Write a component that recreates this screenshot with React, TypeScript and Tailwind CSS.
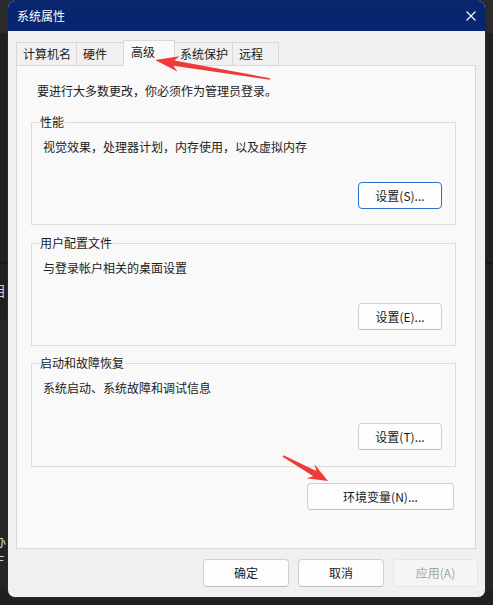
import React from "react";

// --- DATA ---
const TABS = [
  { label: "计算机名", cls: "w-[61px] pl-[6px]" },
  { label: "硬件", cls: "w-[48px] pl-[6px] -ml-[1px]" },
  { label: "高级", cls: "w-[52px] pl-[7px] -ml-[1px]", active: true },
  { label: "系统保护", cls: "w-[59px] pl-[5px] -ml-[1px]" },
  { label: "远程", cls: "w-[47px] pl-[6px] -ml-[1px]" },
];

const GROUPS = [
  { title: "性能", desc: "视觉效果，处理器计划，内存使用，以及虚拟内存", btn: "设置(S)...", focused: true, cls: "mt-[23px] h-[103px]" },
  { title: "用户配置文件", desc: "与登录帐户相关的桌面设置", btn: "设置(E)...", cls: "mt-[18px] h-[103px]" },
  { title: "启动和故障恢复", desc: "系统启动、系统故障和调试信息", btn: "设置(T)...", cls: "mt-[17px] h-[104px]" },
];

const WinButton: React.FC<{ label: string; className?: string; focused?: boolean; disabled?: boolean }> = ({
  label,
  className = "",
  focused,
  disabled,
}) => {
  const tone = disabled
    ? "bg-[#f5f5f5] border-[#e5e5e5] text-[#a3a3a3]"
    : focused
    ? "bg-[#fdfdfd] border-[#2a72c9] text-[#1b1b1b]"
    : "bg-[#fdfdfd] border-[#d0d0d0] border-b-[#bdbdbd] text-[#1b1b1b]";
  return (
    <div className={`flex items-center justify-center rounded-[4px] border text-[12px] leading-[16px] ${tone} ${className}`}>
      {label}
    </div>
  );
};

const GroupBox: React.FC<{ group: typeof GROUPS[0] }> = ({ group }) => (
  <div className={`relative flex flex-col border border-[#dcdcdc] pl-[11px] pt-[16px] ${group.cls}`}>
    {/* Legend over the border */}
    <span className="absolute -top-[9px] left-[7px] bg-[#f9f9f9] px-[1px] text-[12px] leading-[16px] text-[#1b1b1b]">
      {group.title}
    </span>
    <p className="text-[12px] leading-[16px] text-[#1b1b1b]">{group.desc}</p>
    <WinButton label={group.btn} focused={group.focused} className="mt-[27px] mr-[13px] h-[27px] w-[84px] self-end" />
  </div>
);

// Red annotation arrows drawn on top of the screenshot
const Arrows = () => (
  <svg className="pointer-events-none absolute left-0 top-0 z-20" width="493" height="605" viewBox="0 0 493 605">
    <polygon
      fill="#f0393a"
      points="155,60 179.5,56.2 174.2,60.4 270.1,78.2 269.8,79.8 173.4,65.8 177.4,71.6"
    />
    <polygon
      fill="#f0393a"
      points="328,481 306.6,478.3 313.4,476.3 282.6,456.7 283.4,455.3 316.4,471.1 314.4,464.3"
    />
  </svg>
);

export default function App() {
  return (
    <div className="relative h-[605px] w-[493px] overflow-hidden bg-[#202020] font-['Noto_Sans_CJK_SC','Noto_Sans',sans-serif]">
      {/* Desktop behind the dialog */}
      <div className="absolute left-0 top-0 h-[33px] w-full bg-[#2b2b2b]" />
      <div className="absolute left-0 top-[262px] h-[2px] w-full bg-[#161616]" />
      <div className="absolute left-0 top-[320px] h-[270px] w-full bg-[#252525]" />
      <span className="absolute -left-[8px] top-[281px] text-[14px] leading-[18px] text-[#cfcfcf]">目</span>
      <span className="absolute -left-[7px] top-[533px] text-[13px] leading-[16px] text-[#cfcfcf]">办</span>
      <span className="absolute -left-[3px] top-[553px] text-[13px] leading-[16px] text-[#cfcfcf]">F</span>

      <div className="relative z-10 pl-[7px]">
        <div className="flex h-[598px] w-[479px] flex-col overflow-hidden rounded-[8px] border border-[#10296b] bg-[#f0f0f0]">
          {/* Title bar */}
          <div className="flex h-[30px] shrink-0 items-center justify-between bg-[#07266f] pl-[9px] pr-[8px]">
            <span className="text-[12px] leading-[16px] text-white">系统属性</span>
            <svg width="10" height="10" viewBox="0 0 10 10" className="mr-[1px]">
              <path d="M0.5 0.5 L9.5 9.5 M9.5 0.5 L0.5 9.5" stroke="white" strokeWidth="1.1" />
            </svg>
          </div>

          {/* Body */}
          <div className="flex flex-1 flex-col pl-[8px] pr-[9px] pt-[9px]">
            {/* Tabs */}
            <div className="relative z-10 -mb-[1px] flex h-[26px] items-end">
              {TABS.map((tab) =>
                tab.active ? (
                  <div
                    key={tab.label}
                    className={`relative z-10 h-[26px] border-x border-t border-[#d9d9d9] bg-[#f9f9f9] pt-[3px] text-[12px] leading-[16px] text-[#1b1b1b] ${tab.cls}`}
                  >
                    {tab.label}
                  </div>
                ) : (
                  <div
                    key={tab.label}
                    className={`h-[24px] border border-[#d9d9d9] bg-[#f0f0f0] pt-[3px] text-[12px] leading-[16px] text-[#1b1b1b] ${tab.cls}`}
                  >
                    {tab.label}
                  </div>
                )
              )}
            </div>

            {/* Tab panel */}
            <div className="flex h-[484px] flex-col border border-[#dadada] bg-[#f9f9f9] pt-[17px]">
              <p className="pl-[20px] text-[12px] leading-[16px] text-[#1b1b1b]">要进行大多数更改，你必须作为管理员登录。</p>
              <div className="ml-[14px] mr-[19px] flex flex-col">
                {GROUPS.map((g) => (
                  <GroupBox key={g.title} group={g} />
                ))}
              </div>
              <WinButton label="环境变量(N)..." className="mr-[21px] mt-[16px] h-[27px] w-[147px] self-end" />
            </div>

            {/* Dialog buttons */}
            <div className="mt-[10px] flex justify-end gap-[9px] pr-[-2px]">
              <WinButton label="确定" className="h-[28px] w-[86px]" />
              <WinButton label="取消" className="h-[28px] w-[86px]" />
              <WinButton label="应用(A)" disabled className="-mr-[2px] h-[28px] w-[85px]" />
            </div>
          </div>
        </div>
      </div>

      <Arrows />
    </div>
  );
}
